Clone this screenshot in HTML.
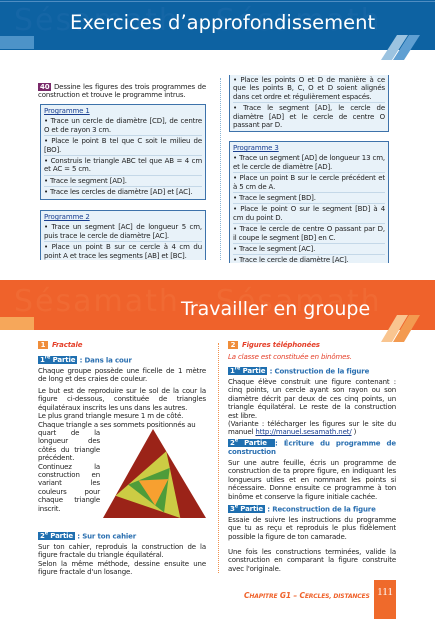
<!DOCTYPE html>
<html><head><meta charset="utf-8"><style>
*{margin:0;padding:0;box-sizing:border-box}
body{width:435px;height:619px;position:relative;overflow:hidden;background:#fff;font-family:"DejaVu Sans","Liberation Sans",sans-serif;font-size:7px;line-height:8.4px;color:#222;letter-spacing:-0.15px}
.a{position:absolute}
.j{text-align:justify}
.box{position:absolute;background:#e8f2f9;border:1px solid #3d72aa;padding:1px 3px}
.box p{border-top:1px solid #c4d8e8;padding:1px 0}
.box p:first-of-type{border-top:none}
.pt{color:#1a3f90;text-decoration:underline;padding:1px 0 1px}
.tag{background:#1f6fb0;color:#fff;font-weight:bold;padding:0 2px}
.h{color:#2a6fb0;font-weight:bold}
.num{display:inline-block;background:#ef8d3a;color:#fff;font-weight:bold;width:10px;text-align:center;margin-right:4px}
.sec{color:#e5402a;font-style:italic;font-weight:bold}
</style></head><body>
<div class="a" style="left:0;top:0;width:435px;height:50px;background:#0d62a2"></div>
<div class="a" style="left:0;top:1px;width:435px;height:1px;background:#4f8dc2"></div>
<div class="a" style="left:0;top:36px;width:34px;height:13px;background:#4d93c8"></div>
<div class="a" style="left:14px;top:6px;font-size:30px;line-height:30px;color:#1566a6;letter-spacing:2px">Sésamath - Sésamath</div>
<div class="a" style="left:70px;top:12px;font-size:19.5px;line-height:22px;color:#fff;letter-spacing:0">Exercices d’approfondissement</div>
<svg class="a" style="left:370px;top:30px" width="60" height="35"><polygon points="11,30 22,30 38,5 27,5" fill="#9cc3e0"/><polygon points="23,30 34,30 50,5 39,5" fill="#5f9fd2"/></svg>

<div class="a j" style="left:38px;top:83px;width:168px"><span style="background:#7a2a6a;color:#fff;font-weight:bold;padding:0 2px">40</span> Dessine les figures des trois programmes de construction et trouve le programme intrus.</div>
<div class="box j" style="left:40px;top:104px;width:166px">
<div class="pt">Programme 1</div>
<p>• Trace un cercle de diamètre [CD], de centre O et de rayon 3 cm.</p>
<p>• Place le point B tel que C soit le milieu de [BO].</p>
<p>• Construis le triangle ABC tel que AB = 4 cm et AC = 5 cm.</p>
<p>• Trace le segment [AD].</p>
<p>• Trace les cercles de diamètre [AD] et [AC].</p>
</div>
<div class="box j" style="left:40px;top:210px;width:166px;height:50px;border-bottom:none;overflow:hidden">
<div class="pt">Programme 2</div>
<p>• Trace un segment [AC] de longueur 5 cm, puis trace le cercle de diamètre [AC].</p>
<p>• Place un point B sur ce cercle à 4 cm du point A et trace les segments [AB] et [BC].</p>
</div>
<div class="a" style="left:220px;top:78px;height:182px;border-left:1.5px dotted #8ab4d4"></div>
<div class="box j" style="left:229px;top:75px;width:160px;border-top:none;padding-top:0">
<p>• Place les points O et D de manière à ce que les points B, C, O et D soient alignés dans cet ordre et régulièrement espacés.</p>
<p>• Trace le segment [AD], le cercle de diamètre [AD] et le cercle de centre O passant par D.</p>
</div>
<div class="box j" style="left:229px;top:141px;width:160px;height:122px;border-bottom:none;overflow:hidden">
<div class="pt">Programme 3</div>
<p>• Trace un segment [AD] de longueur 13 cm, et le cercle de diamètre [AD].</p>
<p>• Place un point B sur le cercle précédent et à 5 cm de A.</p>
<p>• Trace le segment [BD].</p>
<p>• Place le point O sur le segment [BD] à 4 cm du point D.</p>
<p>• Trace le cercle de centre O passant par D, il coupe le segment [BD] en C.</p>
<p>• Trace le segment [AC].</p>
<p>• Trace le cercle de diamètre [AC].</p>
</div>

<div class="a" style="left:0;top:280px;width:435px;height:50px;background:#ef622b"></div>
<div class="a" style="left:0;top:317px;width:34px;height:13px;background:#f6a75a"></div>
<div class="a" style="left:14px;top:287px;font-size:30px;line-height:30px;color:#f06a33;letter-spacing:2px">Sésamath - Sésamath</div>
<div class="a" style="left:181px;top:298px;font-size:19px;line-height:22px;color:#fff;letter-spacing:0">Travailler en groupe</div>
<svg class="a" style="left:370px;top:312px" width="60" height="35"><polygon points="11,30 22,30 38,3 27,3" fill="#f9c590"/><polygon points="23,30 34,30 50,3 39,3" fill="#f39a50"/></svg>

<div class="a" style="left:38px;top:341px"><span class="num">1</span><span class="sec">Fractale</span></div>
<div class="a" style="left:38px;top:354px"><span class="tag">1<sup style="font-size:5px">re</sup> Partie</span><span class="h"> : Dans la cour</span></div>
<div class="a j" style="left:38px;top:367px;width:168px">Chaque groupe possède une ficelle de 1 mètre de long et des craies de couleur.</div>
<div class="a j" style="left:38px;top:387px;width:168px">Le but est de reproduire sur le sol de la cour la figure ci-dessous, constituée de triangles équilatéraux inscrits les uns dans les autres.<br>Le plus grand triangle mesure 1 m de côté.<br>Chaque triangle a ses sommets positionnés au</div>
<div class="a j" style="left:38px;top:429px;width:62px">quart de la longueur des côtés du triangle précédent. Continuez la construction en variant les couleurs pour chaque triangle inscrit.</div>
<svg class="a" style="left:0;top:0" width="435" height="619"><polygon points="153,429 206,518 103,518" fill="#9b2318"/><polygon points="166.3,451.3 180.3,518 115.5,495.8" fill="#cccc44"/><polygon points="169.8,467.9 164.1,512.4 128.2,484.6" fill="#4e9c3a"/><polygon points="168.3,479.1 155.1,505.5 138.6,480.5" fill="#f7a030"/></svg>
<div class="a" style="left:38px;top:530px"><span class="tag">2<sup style="font-size:5px">e</sup> Partie</span><span class="h"> : Sur ton cahier</span></div>
<div class="a j" style="left:38px;top:543px;width:168px">Sur ton cahier, reproduis la construction de la figure fractale du triangle équilatéral.<br>Selon la même méthode, dessine ensuite une figure fractale d'un losange.</div>

<div class="a" style="left:218px;top:343px;height:230px;border-left:1.5px dotted #f0904a"></div>

<div class="a" style="left:228px;top:341px"><span class="num">2</span><span class="sec">Figures téléphonées</span></div>
<div class="a" style="left:228px;top:353px;color:#e5402a;font-style:italic">La classe est constituée en binômes.</div>
<div class="a" style="left:228px;top:365px"><span class="tag">1<sup style="font-size:5px">re</sup> Partie</span><span class="h"> : Construction de la figure</span></div>
<div class="a j" style="left:228px;top:378px;width:168px">Chaque élève construit une figure contenant : cinq points, un cercle ayant son rayon ou son diamètre décrit par deux de ces cinq points, un triangle équilatéral. Le reste de la construction est libre.<br>(Variante : télécharger les figures sur le site du manuel <span style="color:#1a3f90;text-decoration:underline">http://manuel.sesamath.net/</span> )</div>
<div class="a j h" style="left:228px;top:437px;width:168px"><span class="tag">2<sup style="font-size:5px">e</sup> Partie </span> : Écriture du programme de construction</div>
<div class="a j" style="left:228px;top:459px;width:168px">Sur une autre feuille, écris un programme de construction de ta propre figure, en indiquant les longueurs utiles et en nommant les points si nécessaire. Donne ensuite ce programme à ton binôme et conserve la figure initiale cachée.</div>
<div class="a" style="left:228px;top:503px"><span class="tag">3<sup style="font-size:5px">e</sup> Partie</span><span class="h"> : Reconstruction de la figure</span></div>
<div class="a j" style="left:228px;top:516px;width:168px">Essaie de suivre les instructions du programme que tu as reçu et reproduis le plus fidèlement possible la figure de ton camarade.</div>
<div class="a j" style="left:228px;top:548px;width:168px">Une fois les constructions terminées, valide la construction en comparant la figure construite avec l'originale.</div>

<div class="a" style="left:244px;top:592px;color:#ef622b;font-style:italic;font-weight:bold;font-size:7.5px">C<span style="font-size:6px">HAPITRE</span> G1 – C<span style="font-size:6px">ERCLES, DISTANCES</span></div>
<div class="a" style="left:374px;top:580px;width:22px;height:39px;background:#ef6a2b;color:#fff;font-family:'Liberation Serif',serif;font-size:11px;text-align:center;padding-top:6px;line-height:12px;letter-spacing:0">111</div>
</body></html>
